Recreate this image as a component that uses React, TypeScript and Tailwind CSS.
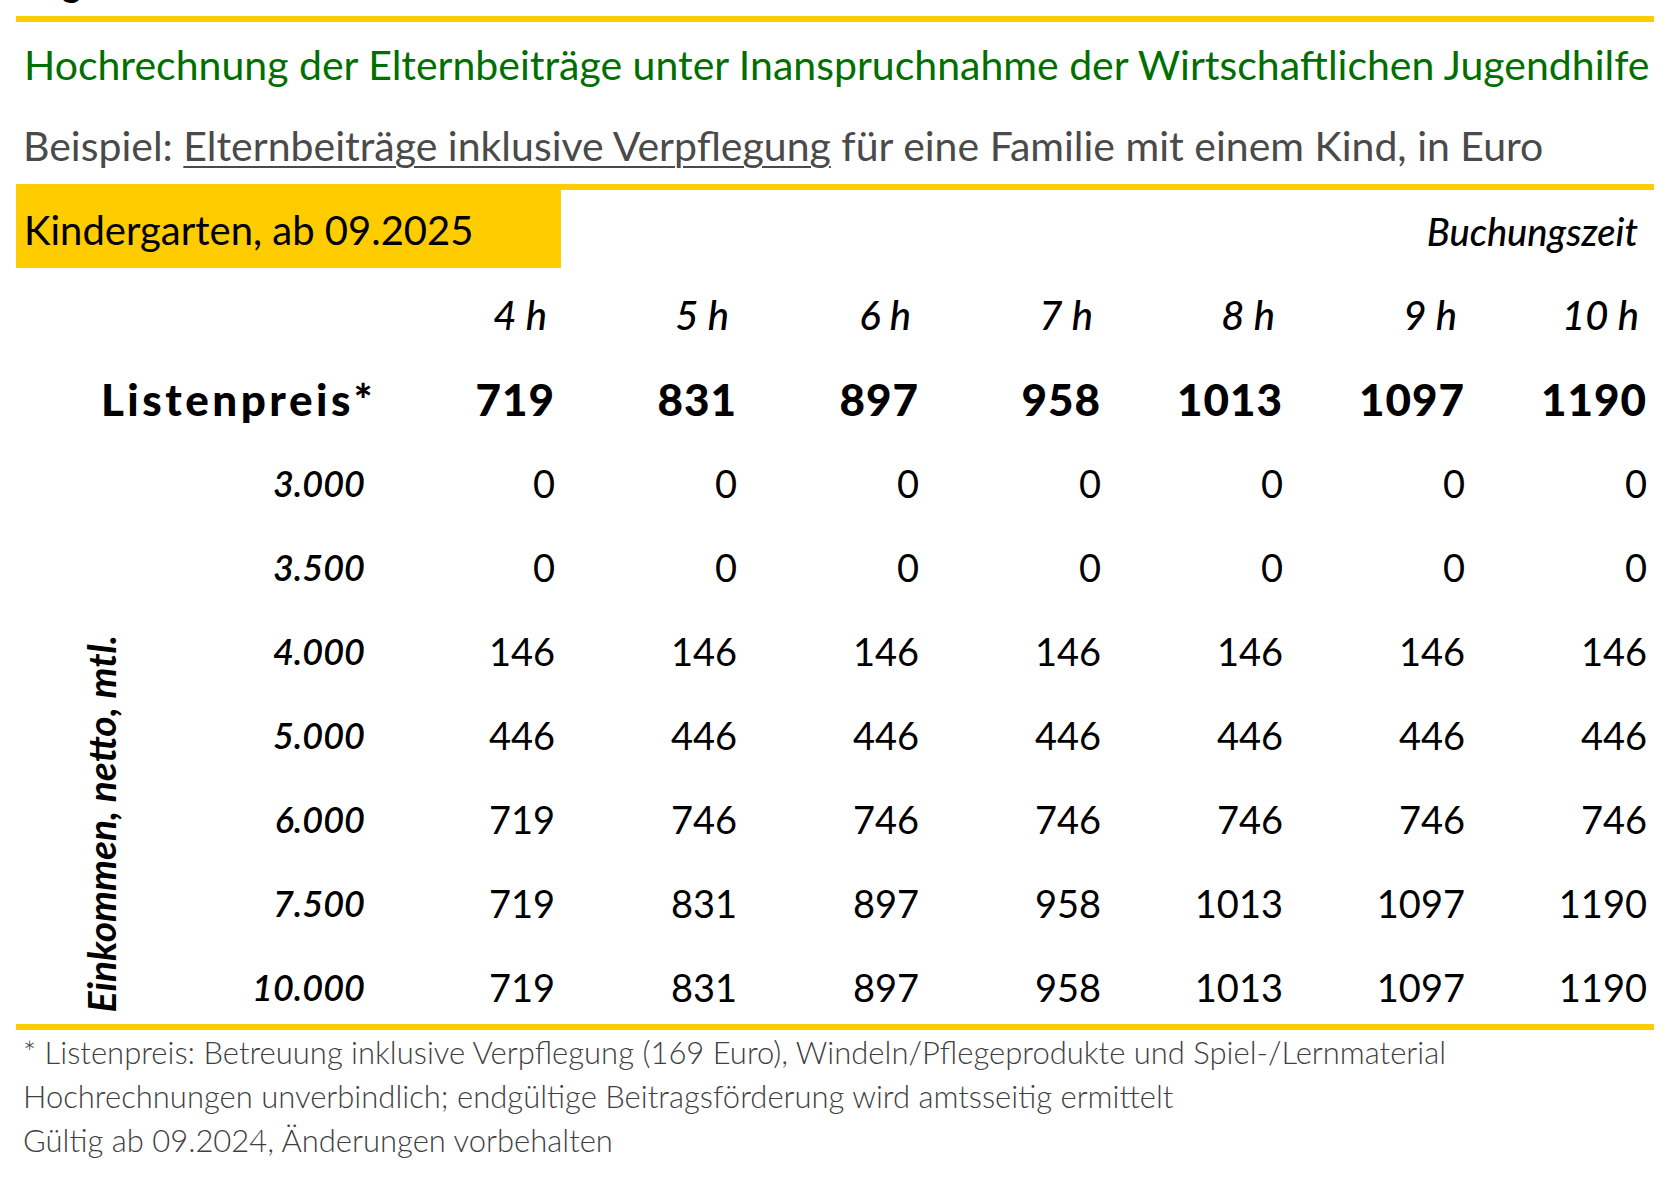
import React from 'react';

const hours = ['4 h', '5 h', '6 h', '7 h', '8 h', '9 h', '10 h'];
const listPrice = [719, 831, 897, 958, 1013, 1097, 1190];

const rows: { label: string; values: number[] }[] = [
  { label: '3.000', values: [0, 0, 0, 0, 0, 0, 0] },
  { label: '3.500', values: [0, 0, 0, 0, 0, 0, 0] },
  { label: '4.000', values: [146, 146, 146, 146, 146, 146, 146] },
  { label: '5.000', values: [446, 446, 446, 446, 446, 446, 446] },
  { label: '6.000', values: [719, 746, 746, 746, 746, 746, 746] },
  { label: '7.500', values: listPrice },
  { label: '10.000', values: listPrice },
];

export default function App() {
  return (
    <div className="w-[1670px] h-[1178px] bg-white overflow-hidden font-['Lato',sans-serif] text-black">
      {/* previous heading, cut off at the top */}
      <div className="h-[16px] overflow-hidden px-[26px]">
        <div className="-mt-[37px] text-[36px] leading-[40px] font-bold">Tagesstätte</div>
      </div>

      <div className="mx-[16px] h-[6px] bg-[#ffcc00]" />

      <div className="h-[85px] leading-[85px] px-[24px] text-[41px] text-[#006f00] whitespace-nowrap">
        Hochrechnung der Elternbeiträge unter Inanspruchnahme der Wirtschaftlichen Jugendhilfe
      </div>

      <div className="h-[77px] leading-[77px] px-[23px] text-[41px] text-[#4a4a4a] whitespace-nowrap">
        Beispiel:{' '}
        <span className="underline decoration-2 underline-offset-[5px]">Elternbeiträge inklusive Verpflegung</span>{' '}
        für eine Familie mit einem Kind, in Euro
      </div>

      <div className="mx-[16px] h-[6px] bg-[#ffcc00]" />

      <div className="mx-[16px] h-[78px] flex justify-between">
        <div className="w-[545px] bg-[#ffcc00] pt-[19px] pl-[8px] text-[40px] leading-[43px] whitespace-nowrap">
          Kindergarten, ab 09.2025
        </div>
        <div className="pt-[22px] pr-[16px] text-[38px] leading-[38px] italic font-medium">Buchungszeit</div>
      </div>

      <div className="relative mx-[16px]">
        <div className="grid grid-cols-[357px_repeat(7,182px)]">
          <div className="h-[84px]" />
          {hours.map((h) => (
            <div key={h} className="h-[84px] pt-[10px] leading-[74px] text-right pr-[8px] text-[40px] italic font-medium">
              {h}
            </div>
          ))}

          <div className="h-[84px] pt-[10px] leading-[74px] text-right text-[44px] font-black">
            <span className="tracking-[3.5px] -mr-[3px]">Listenpreis*</span>
          </div>
          {listPrice.map((v, i) => (
            <div key={i} className="h-[84px] pt-[10px] leading-[74px] text-right text-[44px] font-black">
              <span className="tracking-[1px]">{v}</span>
            </div>
          ))}

          {rows.map((r) => (
            <React.Fragment key={r.label}>
              <div className="h-[84px] pt-[10px] leading-[74px] text-right pr-[8px] text-[36px] italic font-semibold">
                {r.label}
              </div>
              {r.values.map((v, i) => (
                <div key={i} className="h-[84px] pt-[10px] leading-[74px] text-right text-[38px]">
                  {v}
                </div>
              ))}
            </React.Fragment>
          ))}
        </div>

        <div className="absolute left-[62px] bottom-[12px] [writing-mode:vertical-rl] rotate-180 text-[39px] leading-[46px] italic font-bold whitespace-nowrap">
          Einkommen, netto, mtl.
        </div>
      </div>

      <div className="mx-[16px] h-[6px] bg-[#ffcc00]" />

      <div className="px-[23px] text-[31px] leading-[44px] font-light text-[#404040]">
        <p>* Listenpreis: Betreuung inklusive Verpflegung (169 Euro), Windeln/Pflegeprodukte und Spiel-/Lernmaterial</p>
        <p>Hochrechnungen unverbindlich; endgültige Beitragsförderung wird amtsseitig ermittelt</p>
        <p>Gültig ab 09.2024, Änderungen vorbehalten</p>
      </div>
    </div>
  );
}
